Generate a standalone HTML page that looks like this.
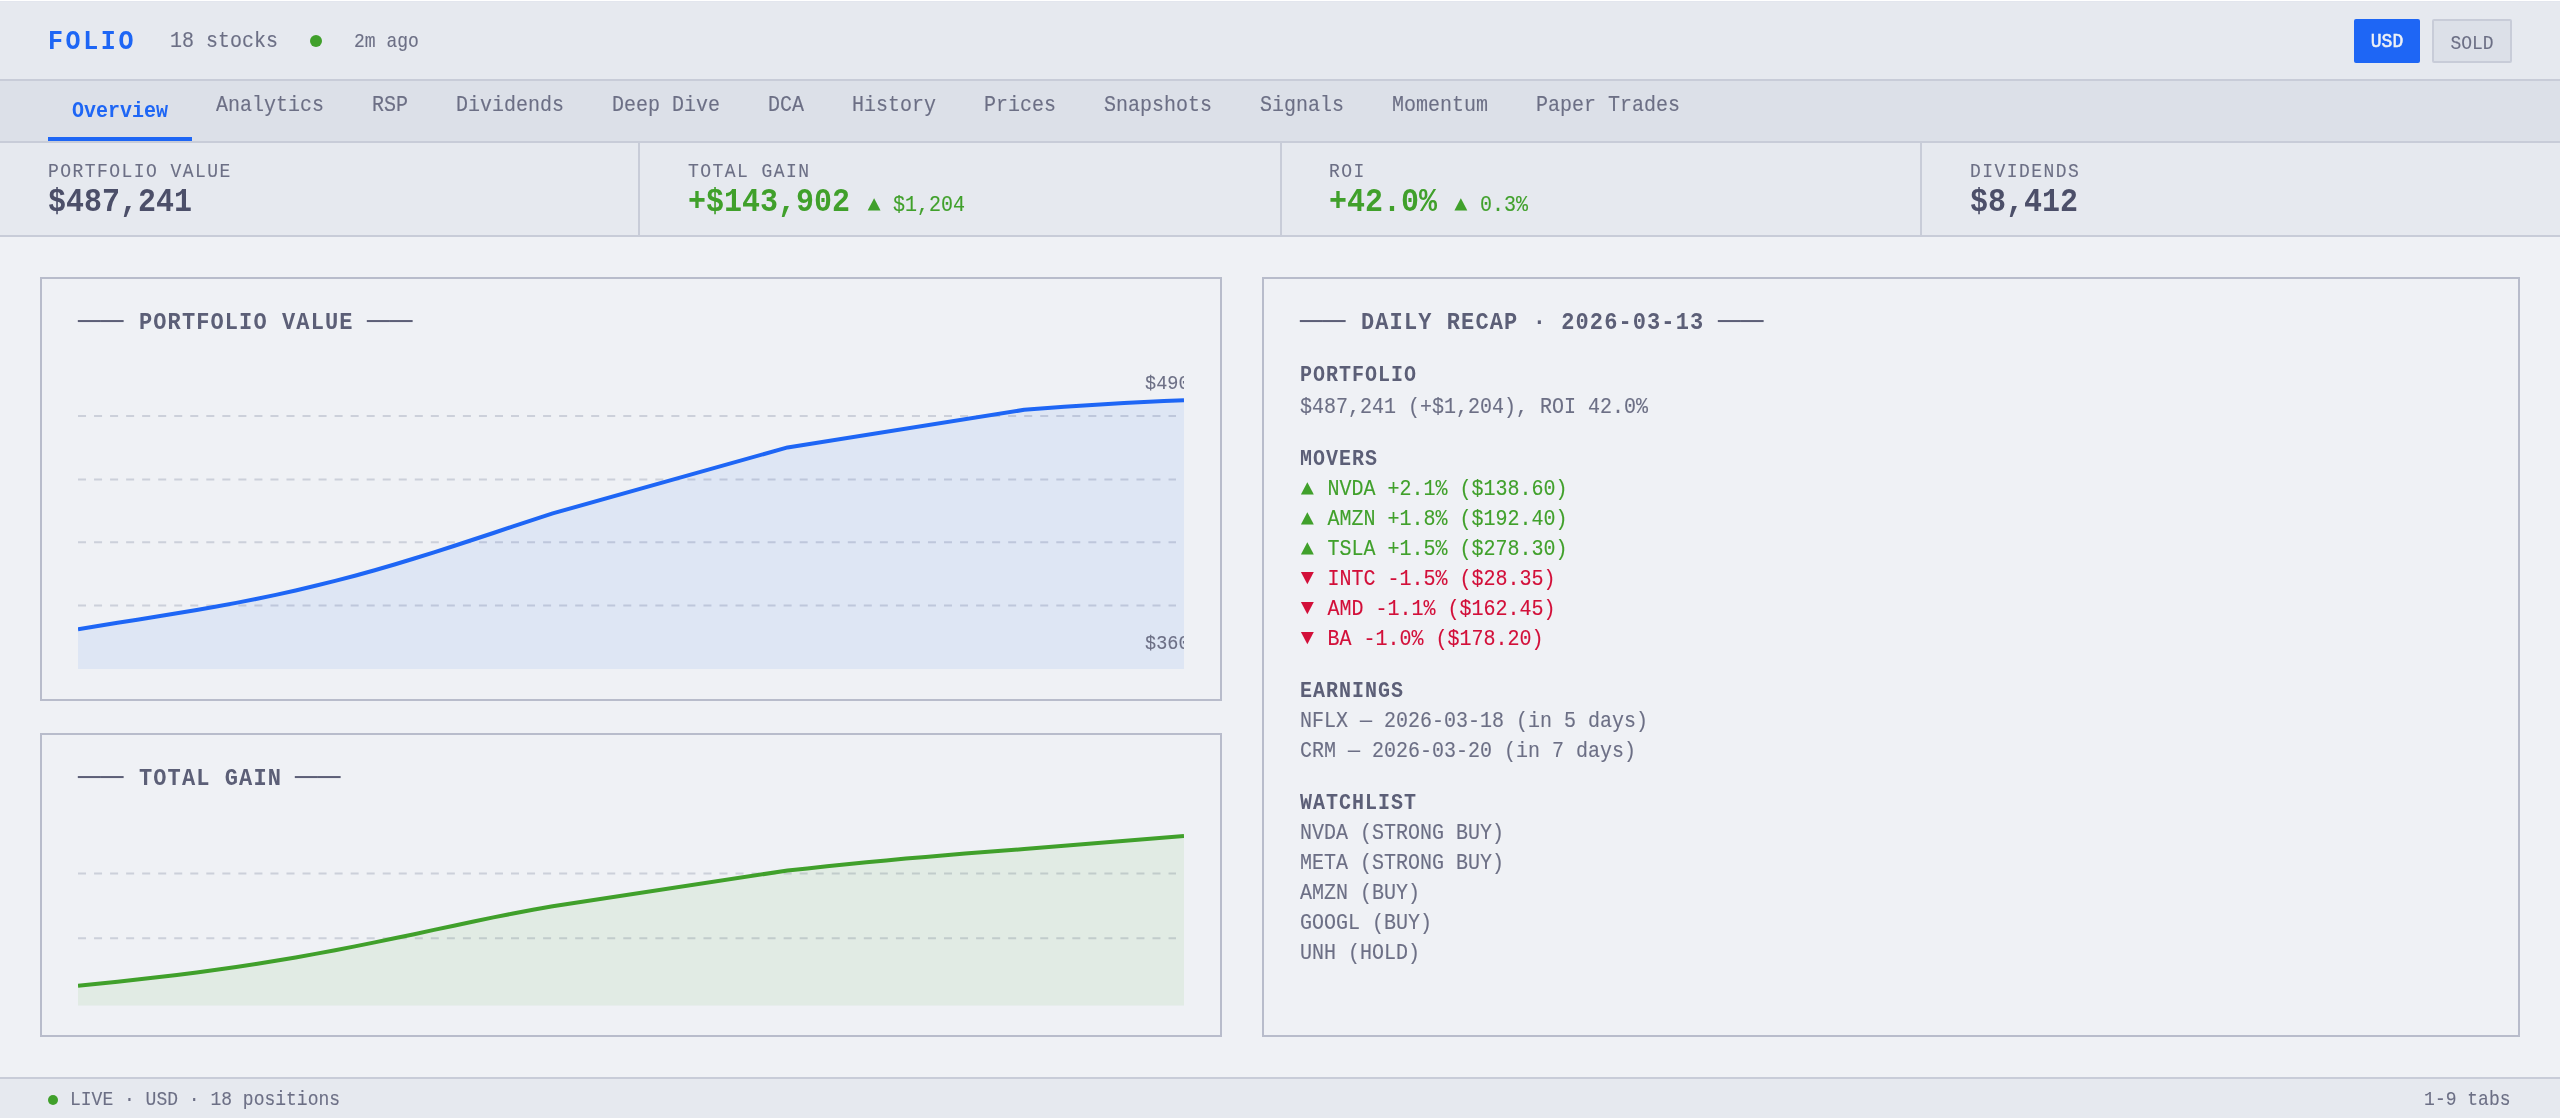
<!DOCTYPE html>
<html lang="en">
<head>
<meta charset="utf-8">
<title>FOLIO · Overview</title>
<style>
/* All coordinates are device pixels of the 2560x1118 reference (a 1280x559 @2x capture). */
html,body{margin:0;padding:0}
body{width:2560px;height:1118px;position:relative;overflow:hidden;background:#eff1f5;font-family:"Liberation Mono", "DejaVu Sans Mono", monospace;}
#app{position:absolute;left:0;top:0;width:2560px;height:1118px;will-change:transform}
.b{position:absolute}
.t{position:absolute;white-space:pre;font-family:"Liberation Mono", "DejaVu Sans Mono", monospace;transform:scaleY(1.1)}
.tri{transform:none}
.dash{font-size:22px;line-height:22px;color:#5c5f77;transform-origin:0 70%;transform:scale(1.72,1.3);letter-spacing:0}
.chart{position:absolute;display:block;overflow:hidden}
.panel{position:absolute;box-sizing:border-box;border:2px solid #b8bccb}
/* if the page is opened in a 1280-wide (@2x) viewport, keep the same device-pixel geometry */
@media (max-width:1400px){body{width:1280px;height:559px}#app{transform:scale(.5);transform-origin:0 0}}
</style>
</head>
<body>
<div id="app">

<header>
<div class="b" style="left:0;top:0;width:2560px;height:79px;background:#e6e9ef"></div>
<div class="b" style="left:0;top:0;width:2560px;height:1px;background:#ffffff"></div>
<div class="b" style="left:0;top:1px;width:2560px;height:1px;background:#e3e6ee"></div>
<div class="b" style="left:0;top:79px;width:2560px;height:2px;background:#c8ccd8"></div>
<div class="b" style="left:310px;top:35px;width:12px;height:12px;border-radius:50%;background:#40a02b"></div>
<div class="b" style="left:2354px;top:19px;width:66px;height:44px;border-radius:2px;background:#1e66f5"></div>
<div class="b" style="left:2432px;top:19px;width:80px;height:44px;box-sizing:border-box;border:2px solid #c8ccd8;border-radius:2px;background:#dce0e8"></div>
<div class="t" style="top:30px;font-size:25px;line-height:25px;letter-spacing:2.6px;color:#1e66f5;font-weight:700;transform-origin:0 19px;left:48px;">FOLIO</div>
<div class="t" style="top:32px;font-size:20px;line-height:20px;letter-spacing:0px;color:#6c6f85;-webkit-text-stroke:0.12px #6c6f85;transform-origin:0 15px;left:170px;">18 stocks</div>
<div class="t" style="top:33px;font-size:18px;line-height:18px;letter-spacing:0px;color:#6c6f85;-webkit-text-stroke:0.11px #6c6f85;transform-origin:0 14px;left:354px;">2m ago</div>
<div class="t" style="top:33px;font-size:18px;line-height:18px;letter-spacing:0px;color:#eff1f5;-webkit-text-stroke:0.54px #eff1f5;transform-origin:0 14px;left:2370.8px;">USD</div>
<div class="t" style="top:35px;font-size:18px;line-height:18px;letter-spacing:0px;color:#6c6f85;-webkit-text-stroke:0.11px #6c6f85;transform-origin:0 14px;left:2450.4px;">SOLD</div>
</header>

<nav>
<div class="b" style="left:0;top:81px;width:2560px;height:60px;background:#dce0e8"></div>
<div class="b" style="left:0;top:141px;width:2560px;height:2px;background:#c8ccd8"></div>
<div class="b" style="left:48px;top:137px;width:144px;height:4px;background:#1e66f5"></div>
<div class="t" style="top:102px;font-size:20px;line-height:20px;letter-spacing:0px;color:#1e66f5;font-weight:700;transform-origin:0 15px;left:72px;">Overview</div>
<div class="t" style="top:96px;font-size:20px;line-height:20px;letter-spacing:0px;color:#6c6f85;-webkit-text-stroke:0.12px #6c6f85;transform-origin:0 15px;left:216px;">Analytics</div>
<div class="t" style="top:96px;font-size:20px;line-height:20px;letter-spacing:0px;color:#6c6f85;-webkit-text-stroke:0.12px #6c6f85;transform-origin:0 15px;left:372px;">RSP</div>
<div class="t" style="top:96px;font-size:20px;line-height:20px;letter-spacing:0px;color:#6c6f85;-webkit-text-stroke:0.12px #6c6f85;transform-origin:0 15px;left:456px;">Dividends</div>
<div class="t" style="top:96px;font-size:20px;line-height:20px;letter-spacing:0px;color:#6c6f85;-webkit-text-stroke:0.12px #6c6f85;transform-origin:0 15px;left:612px;">Deep Dive</div>
<div class="t" style="top:96px;font-size:20px;line-height:20px;letter-spacing:0px;color:#6c6f85;-webkit-text-stroke:0.12px #6c6f85;transform-origin:0 15px;left:768px;">DCA</div>
<div class="t" style="top:96px;font-size:20px;line-height:20px;letter-spacing:0px;color:#6c6f85;-webkit-text-stroke:0.12px #6c6f85;transform-origin:0 15px;left:852px;">History</div>
<div class="t" style="top:96px;font-size:20px;line-height:20px;letter-spacing:0px;color:#6c6f85;-webkit-text-stroke:0.12px #6c6f85;transform-origin:0 15px;left:984px;">Prices</div>
<div class="t" style="top:96px;font-size:20px;line-height:20px;letter-spacing:0px;color:#6c6f85;-webkit-text-stroke:0.12px #6c6f85;transform-origin:0 15px;left:1104px;">Snapshots</div>
<div class="t" style="top:96px;font-size:20px;line-height:20px;letter-spacing:0px;color:#6c6f85;-webkit-text-stroke:0.12px #6c6f85;transform-origin:0 15px;left:1260px;">Signals</div>
<div class="t" style="top:96px;font-size:20px;line-height:20px;letter-spacing:0px;color:#6c6f85;-webkit-text-stroke:0.12px #6c6f85;transform-origin:0 15px;left:1392px;">Momentum</div>
<div class="t" style="top:96px;font-size:20px;line-height:20px;letter-spacing:0px;color:#6c6f85;-webkit-text-stroke:0.12px #6c6f85;transform-origin:0 15px;left:1536px;">Paper Trades</div>
</nav>

<section id="stats">
<div class="b" style="left:0;top:143px;width:2560px;height:92px;background:#e6e9ef"></div>
<div class="b" style="left:0;top:235px;width:2560px;height:2px;background:#c8ccd8"></div>
<div class="b" style="left:638px;top:143px;width:2px;height:92px;background:#c8ccd8"></div>
<div class="b" style="left:1280px;top:143px;width:2px;height:92px;background:#c8ccd8"></div>
<div class="b" style="left:1920px;top:143px;width:2px;height:92px;background:#c8ccd8"></div>
<div class="t" style="top:163px;font-size:18px;line-height:18px;letter-spacing:1.44px;color:#6c6f85;-webkit-text-stroke:0.11px #6c6f85;transform-origin:0 14px;left:48px;">PORTFOLIO VALUE</div>
<div class="t" style="top:188px;font-size:30px;line-height:30px;letter-spacing:0px;color:#4c4f69;font-weight:700;transform-origin:0 23px;left:48px;">$487,241</div>
<div class="t" style="top:163px;font-size:18px;line-height:18px;letter-spacing:1.44px;color:#6c6f85;-webkit-text-stroke:0.11px #6c6f85;transform-origin:0 14px;left:688px;">TOTAL GAIN</div>
<div class="t" style="top:188px;font-size:30px;line-height:30px;letter-spacing:0px;color:#40a02b;font-weight:700;transform-origin:0 23px;left:688px;">+$143,902</div>
<div class="t" style="top:196px;font-size:20px;line-height:20px;letter-spacing:0px;color:#40a02b;-webkit-text-stroke:0.12px #40a02b;transform-origin:0 15px;left:893px;">$1,204</div>
<div class="t" style="top:163px;font-size:18px;line-height:18px;letter-spacing:1.44px;color:#6c6f85;-webkit-text-stroke:0.11px #6c6f85;transform-origin:0 14px;left:1329px;">ROI</div>
<div class="t" style="top:188px;font-size:30px;line-height:30px;letter-spacing:0px;color:#40a02b;font-weight:700;transform-origin:0 23px;left:1329px;">+42.0%</div>
<div class="t" style="top:196px;font-size:20px;line-height:20px;letter-spacing:0px;color:#40a02b;-webkit-text-stroke:0.12px #40a02b;transform-origin:0 15px;left:1480px;">0.3%</div>
<div class="t" style="top:163px;font-size:18px;line-height:18px;letter-spacing:1.44px;color:#6c6f85;-webkit-text-stroke:0.11px #6c6f85;transform-origin:0 14px;left:1970px;">DIVIDENDS</div>
<div class="t" style="top:188px;font-size:30px;line-height:30px;letter-spacing:0px;color:#4c4f69;font-weight:700;transform-origin:0 23px;left:1970px;">$8,412</div>
<div class="t tri" style="left:867.45px;top:195px;font-size:22px;line-height:22px;color:#40a02b">▲</div>
<div class="t tri" style="left:1454.35px;top:195px;font-size:22px;line-height:22px;color:#40a02b">▲</div>
</section>

<main>
<section id="portfolio-value">
<div class="panel" style="left:40px;top:277px;width:1182px;height:424px"></div>
<svg class="chart" style="left:78px;top:353px" width="1106" height="316" viewBox="0 0 1106 316"><g stroke="#ccd0da" stroke-width="2" stroke-dasharray="8.02 8.017" fill="none"><line x1="0" x2="1098" y1="63" y2="63"/><line x1="0" x2="1098" y1="126.4" y2="126.4"/><line x1="0" x2="1098" y1="189.3" y2="189.3"/><line x1="0" x2="1098" y1="252.5" y2="252.5"/></g><polygon points="0,276.3 19.8,273 39.6,269.8 59.3,266.7 79.1,263.5 98.9,260.3 118.7,257 138.5,253.5 158.2,249.9 178,246 197.8,241.9 217.6,237.5 237.4,232.8 257.1,227.9 276.9,222.7 296.7,217.2 316.5,211.5 336.2,205.5 356,199.3 375.8,193 395.6,186.5 415.4,180 435.1,173.4 454.9,166.8 474.7,160.4 709.6,94.4 946.2,56.8 966.2,55.3 986.2,53.8 1006.1,52.5 1026.1,51.2 1046.1,50.1 1066,49.1 1086,48.1 1106,47.3 1106,316 0,316" fill="#1e66f5" fill-opacity="0.08"/><polyline points="0,276.3 19.8,273 39.6,269.8 59.3,266.7 79.1,263.5 98.9,260.3 118.7,257 138.5,253.5 158.2,249.9 178,246 197.8,241.9 217.6,237.5 237.4,232.8 257.1,227.9 276.9,222.7 296.7,217.2 316.5,211.5 336.2,205.5 356,199.3 375.8,193 395.6,186.5 415.4,180 435.1,173.4 454.9,166.8 474.7,160.4 709.6,94.4 946.2,56.8 966.2,55.3 986.2,53.8 1006.1,52.5 1026.1,51.2 1046.1,50.1 1066,49.1 1086,48.1 1106,47.3" fill="none" stroke="#1e66f5" stroke-width="4" stroke-linejoin="round"/></svg>
<div class="t dash" style="left:77.7px;top:314px;">──</div>
<div class="t dash" style="left:366.5px;top:314px;">──</div>
<div class="t" style="top:313px;font-size:22px;line-height:22px;letter-spacing:1.1px;color:#5c5f77;font-weight:700;transform-origin:0 16px;left:139px;">PORTFOLIO VALUE</div>
<div class="t" style="top:376px;font-size:18.5px;line-height:18.5px;letter-spacing:0.03px;color:#6c6f85;-webkit-text-stroke:0.11px #6c6f85;transform-origin:0 13px;left:1145px;width:39px;overflow:hidden;">$490k</div>
<div class="t" style="top:636px;font-size:18.5px;line-height:18.5px;letter-spacing:0.03px;color:#6c6f85;-webkit-text-stroke:0.11px #6c6f85;transform-origin:0 13px;left:1145px;width:39px;overflow:hidden;">$360k</div>
</section>

<section id="total-gain">
<div class="panel" style="left:40px;top:733px;width:1182px;height:304px"></div>
<svg class="chart" style="left:78px;top:808px" width="1106" height="198" viewBox="0 0 1106 198"><g stroke="#ccd0da" stroke-width="2" stroke-dasharray="8.02 8.017" fill="none"><line x1="0" x2="1098" y1="65.4" y2="65.4"/><line x1="0" x2="1098" y1="130.3" y2="130.3"/></g><polygon points="0,177.8 19.8,175.8 39.6,173.7 59.3,171.5 79.1,169.3 98.9,166.9 118.7,164.4 138.5,161.8 158.2,159 178,156 197.8,152.8 217.6,149.5 237.4,145.9 257.1,142.3 276.9,138.4 296.7,134.4 316.5,130.3 336.2,126.2 356,121.9 375.8,117.7 395.6,113.5 415.4,109.4 435.1,105.5 454.9,101.7 474.7,98.2 709.6,62.5 729.3,60.4 749,58.3 768.8,56.3 788.5,54.3 808.2,52.5 827.9,50.6 847.6,48.9 867.3,47.2 887.1,45.6 906.8,44 926.5,42.5 946.2,41.1 1106,27.9 1106,197.5 0,197.5" fill="#40a02b" fill-opacity="0.08"/><polyline points="0,177.8 19.8,175.8 39.6,173.7 59.3,171.5 79.1,169.3 98.9,166.9 118.7,164.4 138.5,161.8 158.2,159 178,156 197.8,152.8 217.6,149.5 237.4,145.9 257.1,142.3 276.9,138.4 296.7,134.4 316.5,130.3 336.2,126.2 356,121.9 375.8,117.7 395.6,113.5 415.4,109.4 435.1,105.5 454.9,101.7 474.7,98.2 709.6,62.5 729.3,60.4 749,58.3 768.8,56.3 788.5,54.3 808.2,52.5 827.9,50.6 847.6,48.9 867.3,47.2 887.1,45.6 906.8,44 926.5,42.5 946.2,41.1 1106,27.9" fill="none" stroke="#40a02b" stroke-width="4" stroke-linejoin="round"/></svg>
<div class="t dash" style="left:77.7px;top:770px;">──</div>
<div class="t dash" style="left:295.2px;top:770px;">──</div>
<div class="t" style="top:769px;font-size:22px;line-height:22px;letter-spacing:1.1px;color:#5c5f77;font-weight:700;transform-origin:0 16px;left:139px;">TOTAL GAIN</div>
</section>

<section id="daily-recap">
<div class="panel" style="left:1262px;top:277px;width:1258px;height:760px"></div>
<div class="t dash" style="left:1300px;top:314px;">──</div>
<div class="t dash" style="left:1717.5px;top:314px;">──</div>
<div class="t" style="top:313px;font-size:22px;line-height:22px;letter-spacing:1.1px;color:#5c5f77;font-weight:700;transform-origin:0 16px;left:1361px;">DAILY RECAP · 2026-03-13</div>
<div class="t" style="top:366px;font-size:20px;line-height:20px;letter-spacing:1px;color:#5c5f77;font-weight:700;transform-origin:0 15px;left:1300px;">PORTFOLIO</div>
<div class="t" style="top:398px;font-size:20px;line-height:20px;letter-spacing:0px;color:#6c6f85;-webkit-text-stroke:0.12px #6c6f85;transform-origin:0 15px;left:1300px;">$487,241 (+$1,204), ROI 42.0%</div>
<div class="t" style="top:450px;font-size:20px;line-height:20px;letter-spacing:1px;color:#5c5f77;font-weight:700;transform-origin:0 15px;left:1300px;">MOVERS</div>
<div class="t" style="top:480px;font-size:20px;line-height:20px;letter-spacing:0px;color:#40a02b;-webkit-text-stroke:0.12px #40a02b;transform-origin:0 15px;left:1327.4px;">NVDA +2.1% ($138.60)</div>
<div class="t" style="top:510px;font-size:20px;line-height:20px;letter-spacing:0px;color:#40a02b;-webkit-text-stroke:0.12px #40a02b;transform-origin:0 15px;left:1327.4px;">AMZN +1.8% ($192.40)</div>
<div class="t" style="top:540px;font-size:20px;line-height:20px;letter-spacing:0px;color:#40a02b;-webkit-text-stroke:0.12px #40a02b;transform-origin:0 15px;left:1327.4px;">TSLA +1.5% ($278.30)</div>
<div class="t" style="top:570px;font-size:20px;line-height:20px;letter-spacing:0px;color:#d20f39;-webkit-text-stroke:0.12px #d20f39;transform-origin:0 15px;left:1327.4px;">INTC -1.5% ($28.35)</div>
<div class="t" style="top:600px;font-size:20px;line-height:20px;letter-spacing:0px;color:#d20f39;-webkit-text-stroke:0.12px #d20f39;transform-origin:0 15px;left:1327.4px;">AMD -1.1% ($162.45)</div>
<div class="t" style="top:630px;font-size:20px;line-height:20px;letter-spacing:0px;color:#d20f39;-webkit-text-stroke:0.12px #d20f39;transform-origin:0 15px;left:1327.4px;">BA -1.0% ($178.20)</div>
<div class="t" style="top:682px;font-size:20px;line-height:20px;letter-spacing:1px;color:#5c5f77;font-weight:700;transform-origin:0 15px;left:1300px;">EARNINGS</div>
<div class="t" style="top:712px;font-size:20px;line-height:20px;letter-spacing:0px;color:#6c6f85;-webkit-text-stroke:0.12px #6c6f85;transform-origin:0 15px;left:1300px;">NFLX — 2026-03-18 (in 5 days)</div>
<div class="t" style="top:742px;font-size:20px;line-height:20px;letter-spacing:0px;color:#6c6f85;-webkit-text-stroke:0.12px #6c6f85;transform-origin:0 15px;left:1300px;">CRM — 2026-03-20 (in 7 days)</div>
<div class="t" style="top:794px;font-size:20px;line-height:20px;letter-spacing:1px;color:#5c5f77;font-weight:700;transform-origin:0 15px;left:1300px;">WATCHLIST</div>
<div class="t" style="top:824px;font-size:20px;line-height:20px;letter-spacing:0px;color:#6c6f85;-webkit-text-stroke:0.12px #6c6f85;transform-origin:0 15px;left:1300px;">NVDA (STRONG BUY)</div>
<div class="t" style="top:854px;font-size:20px;line-height:20px;letter-spacing:0px;color:#6c6f85;-webkit-text-stroke:0.12px #6c6f85;transform-origin:0 15px;left:1300px;">META (STRONG BUY)</div>
<div class="t" style="top:884px;font-size:20px;line-height:20px;letter-spacing:0px;color:#6c6f85;-webkit-text-stroke:0.12px #6c6f85;transform-origin:0 15px;left:1300px;">AMZN (BUY)</div>
<div class="t" style="top:914px;font-size:20px;line-height:20px;letter-spacing:0px;color:#6c6f85;-webkit-text-stroke:0.12px #6c6f85;transform-origin:0 15px;left:1300px;">GOOGL (BUY)</div>
<div class="t" style="top:944px;font-size:20px;line-height:20px;letter-spacing:0px;color:#6c6f85;-webkit-text-stroke:0.12px #6c6f85;transform-origin:0 15px;left:1300px;">UNH (HOLD)</div>
<div class="t tri" style="left:1300.85px;top:479px;font-size:22px;line-height:22px;color:#40a02b">▲</div>
<div class="t tri" style="left:1300.85px;top:509px;font-size:22px;line-height:22px;color:#40a02b">▲</div>
<div class="t tri" style="left:1300.85px;top:539px;font-size:22px;line-height:22px;color:#40a02b">▲</div>
<div class="t tri" style="left:1300.85px;top:568px;font-size:22px;line-height:22px;color:#d20f39">▼</div>
<div class="t tri" style="left:1300.85px;top:598px;font-size:22px;line-height:22px;color:#d20f39">▼</div>
<div class="t tri" style="left:1300.85px;top:628px;font-size:22px;line-height:22px;color:#d20f39">▼</div>
</section>
</main>

<footer>
<div class="b" style="left:0;top:1077px;width:2560px;height:2px;background:#c8ccd8"></div>
<div class="b" style="left:0;top:1079px;width:2560px;height:39px;background:#e6e9ef"></div>
<div class="b" style="left:48px;top:1095px;width:10px;height:10px;border-radius:50%;background:#40a02b"></div>
<div class="t" style="top:1091px;font-size:18px;line-height:18px;letter-spacing:0px;color:#6c6f85;-webkit-text-stroke:0.11px #6c6f85;transform-origin:0 14px;left:70px;">LIVE · USD · 18 positions</div>
<div class="t" style="top:1091px;font-size:18px;line-height:18px;letter-spacing:0px;color:#6c6f85;-webkit-text-stroke:0.11px #6c6f85;transform-origin:0 14px;right:49.5px;">1-9 tabs</div>
</footer>

</div>
</body>
</html>
